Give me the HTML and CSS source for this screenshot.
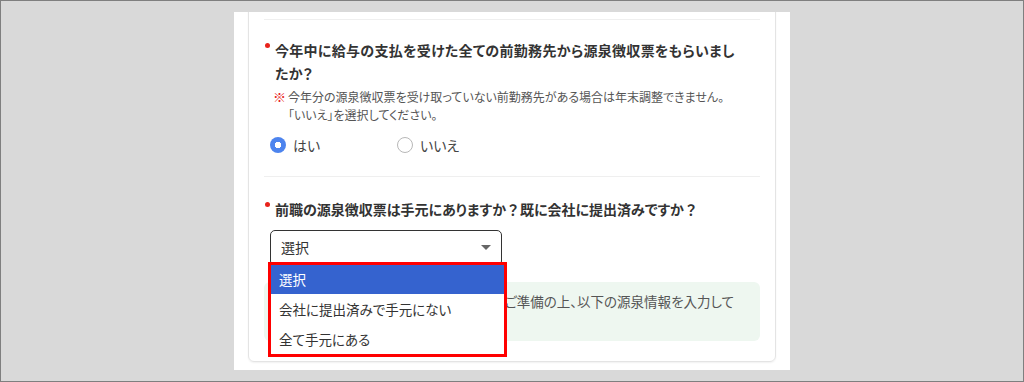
FILE: index.html
```html
<!DOCTYPE html>
<html lang="ja">
<head>
    <meta charset="UTF-8">
    <meta name="viewport" content="width=device-width, initial-scale=1.0">
    <title>前職の源泉徴収票</title>
    <link rel="stylesheet" href="styles.css">
</head>
<body>
    <div class="frame">
        <div class="panel">
            <div class="card">
                <div class="section prev"></div>

                <div class="section">
                    <p class="question q-wide">今年中に給与の支払を受けた全ての前勤務先から源泉徴収票をもらいましたか？</p>
                    <p class="note">
                        <span class="mark">※</span>
                        <span>今年分の源泉徴収票を受け取っていない前勤務先がある場合は年末調整できません。<br>「いいえ」を選択してください。</span>
                    </p>
                    <div class="radios">
                        <label class="radio-item"><span class="radio checked"></span>はい</label>
                        <label class="radio-item"><span class="radio"></span>いいえ</label>
                    </div>
                </div>

                <div class="section last">
                    <p class="question">前職の源泉徴収票は手元にありますか<span class="fw">？</span>既に会社に提出済みですか<span class="fw">？</span></p>
                    <div class="select-wrap">
                        <div class="select">選択<span class="arrow"></span></div>
                        <ul class="options">
                            <li class="active">選択</li>
                            <li>会社に提出済みで手元にない</li>
                            <li>全て手元にある</li>
                        </ul>
                    </div>
                    <div class="info">
                        全ての前勤務先の源泉徴収票をご準備の上、以下の源泉情報を入力して<br>ください。
                    </div>
                </div>
            </div>
        </div>
    </div>
</body>
</html>
```

FILE: styles.css
```css
* {
    box-sizing: border-box;
}
body {
    margin: 0;
    font-family: "Noto Sans CJK JP", sans-serif;
    font-feature-settings: "palt";
    color: #333;
}
.frame {
    width: 1024px;
    height: 382px;
    background: #d9d9d9;
    border: 1px solid #7f7f7f;
    padding: 11px 0 0 233px;
}
.panel {
    width: 556px;
    height: 358px;
    background: #fff;
    padding: 0 14px;
    overflow: hidden;
}
.card {
    margin-top: -20px;
    border: 1px solid #e4e4e4;
    border-radius: 6px;
    box-shadow: 0 1px 2px rgba(0, 0, 0, 0.06);
    padding: 0 15px;
}
.section {
    border-bottom: 1px solid #efefef;
    padding: 19px 0 20px;
}
.section.prev {
    height: 27px;
    padding: 0;
}
.section.last {
    border-bottom: none;
    padding: 21px 0 20px;
}
p {
    margin: 0;
}
.question {
    position: relative;
    padding-left: 11px;
    font-size: 14px;
    font-weight: bold;
    line-height: 23px;
}
.question::before {
    content: "";
    position: absolute;
    left: 1px;
    top: 4px;
    width: 5px;
    height: 5px;
    border-radius: 50%;
    background: #e8231b;
}
.question .fw {
    font-feature-settings: normal;
}
.q-wide {
    width: 480px;
    letter-spacing: 0.3px;
}
.note {
    display: flex;
    margin: 3px 0 0 9px;
    font-size: 12px;
    line-height: 18px;
    color: #555;
}
.note .mark {
    color: #e8231b;
    width: 15px;
    flex-shrink: 0;
    font-size: 13px;
}
.radios {
    display: flex;
    margin: 10px 0 0 6px;
    height: 22px;
    align-items: center;
}
.radio-item {
    display: flex;
    align-items: center;
    width: 127px;
    font-size: 14px;
    color: #444;
}
.radio {
    width: 16px;
    height: 16px;
    border-radius: 50%;
    border: 1.5px solid #b8b8b8;
    margin-right: 7px;
    background: #fff;
}
.radio.checked {
    border: none;
    background: radial-gradient(circle, #fff 0 3px, #4d84ee 3.5px);
}
.select-wrap {
    position: relative;
    margin: 9px 0 0 6px;
    width: 232px;
}
.select {
    position: relative;
    height: 36px;
    border: 1.5px solid #333;
    border-radius: 5px;
    padding-left: 10px;
    font-size: 14px;
    line-height: 33px;
}
.arrow {
    position: absolute;
    right: 10px;
    top: 14px;
    border-left: 5px solid transparent;
    border-right: 5px solid transparent;
    border-top: 5px solid #666;
}
.options {
    position: absolute;
    left: -2px;
    top: 32px;
    width: 239px;
    margin: 0;
    padding: 0;
    list-style: none;
    background: #fff;
    border: 3px solid #ff0000;
    font-size: 13.5px;
    color: #333;
    z-index: 2;
}
.options li {
    height: 30px;
    line-height: 30px;
    padding-left: 8px;
}
.options li.active {
    height: 29px;
    line-height: 29px;
    background: #3563cf;
    color: #fff;
}
.info {
    margin-top: 16px;
    background: #eef7f0;
    border-radius: 6px;
    padding: 9px 16px 10px 55px;
    font-size: 13.5px;
    line-height: 20px;
    color: #555;
}
```
